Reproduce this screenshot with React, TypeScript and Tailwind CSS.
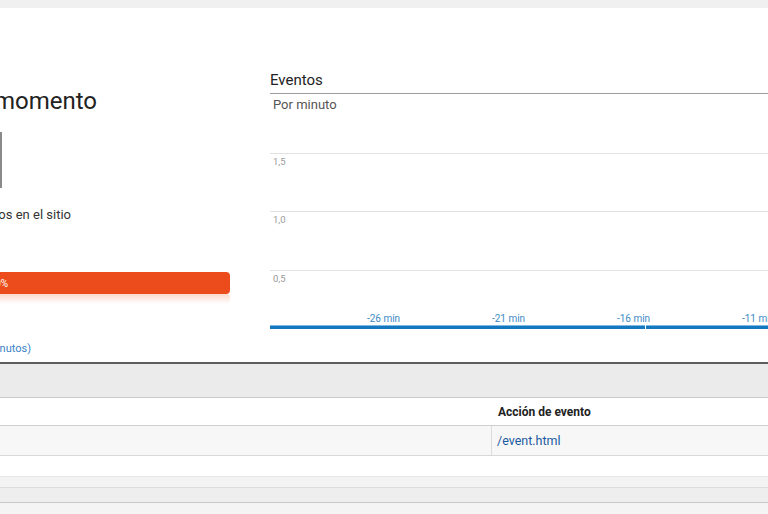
export default function App() {
  const ticks = ["-26 min", "-21 min", "-16 min", "-11 min"];
  const grid = [
    { label: "1,5", h: "h-[58px]" },
    { label: "1,0", h: "h-[59px]" },
    { label: "0,5", h: "h-[43px]" },
  ];

  return (
    <div className="w-[768px] h-[514px] overflow-hidden bg-white font-['Roboto','Liberation_Sans',sans-serif] text-[#222]">
      {/* top strip */}
      <div className="h-[8px] bg-[#f0f0f0]" />

      <div className="flex h-[354px]">
        {/* left: current users */}
        <div className="w-[270px] shrink-0">
          <div className="flex justify-end w-[97px] whitespace-nowrap pt-[79px]">
            <h1 className="text-[24px] leading-[28px] font-normal text-[#222]">En este momento</h1>
          </div>
          <div className="mt-[17px] w-[2px] h-[56px] bg-[#8a8a8a]" />
          <div className="flex justify-end w-[71px] whitespace-nowrap mt-[19px]">
            <span className="text-[13px] leading-[16px] text-[#333]">usuarios activos en el sitio</span>
          </div>
          <div className="mt-[49px] w-[230px]">
            <div className="h-[22px] bg-[#ec4c1b] rounded-r-[4px] flex items-center justify-start overflow-hidden">
              <span className="-ml-[16px] text-[10px] text-white">100%</span>
            </div>
            <div className="h-[10px] bg-gradient-to-b from-[#fbd9cd] to-white rounded-r-[4px]" />
          </div>
          <div className="flex justify-end w-[31px] whitespace-nowrap mt-[38px]">
            <span className="text-[11px] leading-[14px] text-[#3c82c8]">(últimos 30 minutos)</span>
          </div>
        </div>

        {/* right: events chart */}
        <div className="flex-1 pt-[62px]">
          <div className="text-[15px] leading-[20px] pb-[3px] text-[#222] border-b border-[#9e9e9e]">Eventos</div>
          <div className="mt-[3px] ml-[3px] text-[13px] leading-[16px] text-[#555]">Por minuto</div>
          <div className="mt-[40px]">
            {grid.map((g) => (
              <div key={g.label} className={`${g.h} border-t border-[#e2e2e2]`}>
                <div className="pl-[3px] pt-[2px] text-[9.5px] leading-[12px] text-[#999]">{g.label}</div>
              </div>
            ))}
            <div className="flex pl-[51px] h-[12px] whitespace-nowrap">
              {ticks.map((t) => (
                <div key={t} className="w-[125px] shrink-0 text-center text-[10px] leading-[12px] text-[#3d8ac6]">
                  {t}
                </div>
              ))}
            </div>
            <div className="relative">
              <div className="h-[1px] bg-[#7cb9e2]" />
              <div className="h-[3px] bg-[#1478c0]" />
              <div className="absolute left-[375px] top-0 w-[1px] h-[4px] bg-white" />
            </div>
          </div>
        </div>
      </div>

      {/* table */}
      <div className="border-t-2 border-[#5e5e5e]">
        <div className="h-[34px] bg-[#ebebeb] border-b border-[#c8c8c8]" />
        <div className="grid grid-cols-[492px_1fr] h-[28px] bg-white border-b border-[#cfcfcf]">
          <div />
          <div className="pl-[6px] flex items-center text-[12px] font-bold text-[#222]">Acción de evento</div>
        </div>
        <div className="grid grid-cols-[492px_1fr] h-[30px] bg-[#f7f7f7] border-b border-[#d8d8d8]">
          <div className="border-r border-[#dcdcdc]" />
          <div className="pl-[5px] pt-[1px] flex items-center text-[12.5px] text-[#1a5aa0]">/event.html</div>
        </div>
        <div className="h-[21px] bg-white border-b border-[#e6e6e6]" />
        <div className="h-[11px] bg-[#f3f3f3] border-b border-[#dcdcdc]" />
        <div className="h-[15px] bg-[#eeeeee] border-b border-[#c8c8c8]" />
        <div className="h-[12px] bg-[#f4f4f4]" />
      </div>
    </div>
  );
}
